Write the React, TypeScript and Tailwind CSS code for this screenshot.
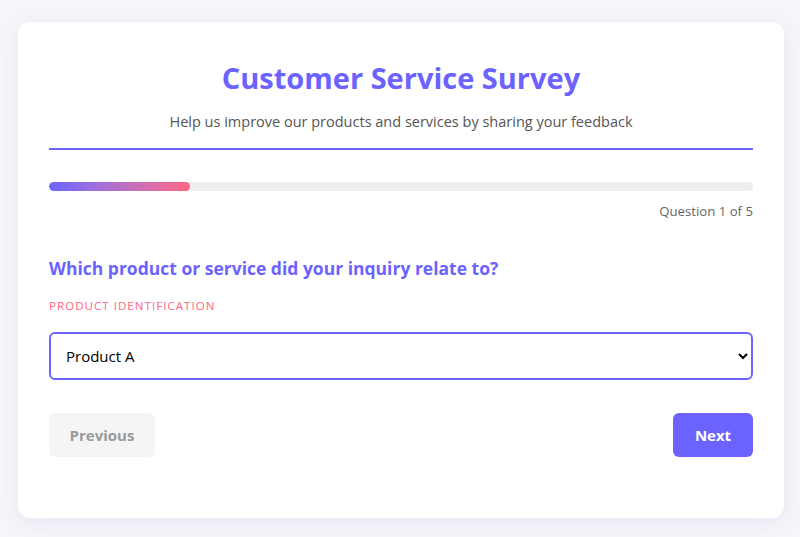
import { useState } from 'react';

export default function App() {
  const [product, setProduct] = useState('Product A');
  const step = 1;
  const total = 5;

  return (
    <div className="min-h-screen bg-[#f5f6fb] pt-[22px] pl-[18px] font-['Open_Sans','Noto_Sans',sans-serif]">
      <div className="w-[766px] h-[496px] bg-white rounded-xl shadow-[0_4px_20px_rgba(60,60,120,0.08)] px-[31px] pt-[38px]">
        <div className="text-center border-b-2 border-[#6c63ff] pb-[14px]">
          <h1 className="text-[29px] leading-[36px] font-bold text-[#6c63ff]">Customer Service Survey</h1>
          <p className="mt-[14px] text-[14.5px] leading-[24px] text-[#555]">
            Help us improve our products and services by sharing your feedback
          </p>
        </div>

        <div className="mt-[32px] h-[9px] rounded-full bg-[#eeeeee] overflow-hidden">
          <div
            className="h-full rounded-full bg-gradient-to-r from-[#6c63ff] to-[#ff6584]"
            style={{ width: `${(step / total) * 100}%` }}
          />
        </div>
        <div className="mt-[10px] text-right text-[13.2px] leading-[20px] text-[#666]">
          Question {step} of {total}
        </div>

        <h2 className="mt-[34px] text-[17.5px] leading-[26px] font-bold text-[#6c63ff]">
          Which product or service did your inquiry relate to?
        </h2>
        <div className="mt-[17px] text-[11.6px] leading-[16px] uppercase tracking-[1px] text-[#ff6584]">
          Product Identification
        </div>

        <select
          value={product}
          onChange={(e) => setProduct(e.target.value)}
          className="mt-[18px] w-full h-[48px] border-2 border-[#6c63ff] rounded-md px-[11px] text-[15px] text-black bg-white outline-none"
        >
          <option>Product A</option>
          <option>Product B</option>
          <option>Service A</option>
          <option>Service B</option>
        </select>

        <div className="mt-[33px] flex justify-between">
          <button
            disabled
            className="h-[44px] w-[106px] rounded-md bg-[#f5f5f5] text-[15px] font-bold text-[#999]"
          >
            Previous
          </button>
          <button className="h-[44px] w-[80px] rounded-md bg-[#6c63ff] text-[15px] font-bold text-white">
            Next
          </button>
        </div>
      </div>
    </div>
  );
}
